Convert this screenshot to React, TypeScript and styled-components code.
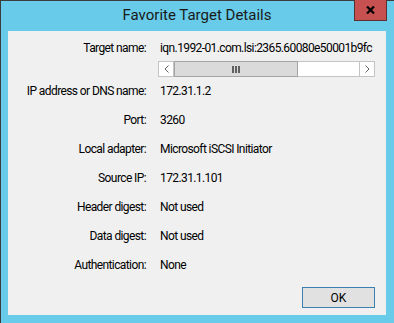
import styled, { createGlobalStyle } from "styled-components";

const GlobalStyle = createGlobalStyle`
  html, body {
    margin: 0;
    padding: 0;
    background: #ffffff;
  }
  * {
    box-sizing: border-box;
  }
`;

const Window = styled.div`
  position: relative;
  width: 394px;
  height: 323px;
  display: flex;
  flex-direction: column;
  background: #67cbe9;
  box-shadow: inset 1px 1px 0 #3c3c3c;
  font-family: Roboto, "Noto Sans", sans-serif;
  color: #000;
`;

const TitleBar = styled.div`
  height: 31px;
  display: flex;
  align-items: center;
  justify-content: center;
  font-size: 15px;
  color: #1a1a1a;
  padding-bottom: 1px;
`;

const CloseButton = styled.div`
  position: absolute;
  top: 0;
  right: 7px;
  width: 33px;
  height: 21px;
  display: flex;
  align-items: center;
  justify-content: center;
  background: #c75050;
  border: 1px solid #5b3030;
  border-top: none;
`;

const Client = styled.div`
  flex: 1;
  margin: 0 8px 8px 8px;
  background: #f0f0f0;
  padding: 10px 11px 7px 0;
  display: flex;
  flex-direction: column;
  font-size: 12px;
  letter-spacing: -0.6px;
`;

const Field = styled.div<{ $tall?: boolean }>`
  display: grid;
  grid-template-columns: 138px 1fr;
  column-gap: 14px;
  align-items: ${(p) => (p.$tall ? "start" : "center")};
  height: ${(p) => (p.$tall ? "auto" : "29px")};
  line-height: 15px;
`;

const Label = styled.div`
  text-align: right;
  white-space: nowrap;
`;

const Value = styled.div`
  white-space: nowrap;
`;

const ValueStack = styled.div`
  display: flex;
  flex-direction: column;
  gap: 5px;
`;

const Scrollbar = styled.div`
  width: 217px;
  height: 16px;
  margin-left: -2px;
  display: flex;
  background: #ffffff;
  border: 1px solid #c4c4c4;
`;

const Arrow = styled.div<{ $side: "left" | "right" }>`
  width: 15px;
  height: 14px;
  display: flex;
  align-items: center;
  justify-content: center;
  background: #ffffff;
  ${(p) =>
    p.$side === "left"
      ? "border-right: 1px solid #c4c4c4;"
      : "border-left: 1px solid #c4c4c4;"}
`;

const Thumb = styled.div`
  width: 124px;
  height: 16px;
  margin: -1px 0;
  display: flex;
  align-items: center;
  justify-content: center;
  background: #dadada;
  border: 1px solid #a4a4a4;
`;

const Track = styled.div`
  flex: 1;
`;

const Footer = styled.div`
  display: flex;
  justify-content: flex-end;
  margin-top: 7px;
`;

const Button = styled.button`
  width: 73px;
  height: 21px;
  padding: 0;
  font-family: inherit;
  font-size: 12px;
  color: #000;
  background: #e1e1e1;
  border: 1px solid #3c7fb1;
`;

const Chevron = ({ dir }: { dir: "left" | "right" }) => (
  <svg width="5" height="8" viewBox="0 0 5 8">
    <polyline
      points={dir === "left" ? "4.5,0.5 1,4 4.5,7.5" : "0.5,0.5 4,4 0.5,7.5"}
      fill="none"
      stroke="#606060"
      strokeWidth="1"
    />
  </svg>
);

const Grip = () => (
  <svg width="8" height="7" viewBox="0 0 8 7">
    <rect x="0" y="0" width="2" height="7" fill="#5f5f5f" />
    <rect x="3" y="0" width="2" height="7" fill="#5f5f5f" />
    <rect x="6" y="0" width="2" height="7" fill="#5f5f5f" />
  </svg>
);

const fields = [
  { label: "IP address or DNS name:", value: "172.31.1.2" },
  { label: "Port:", value: "3260" },
  { label: "Local adapter:", value: "Microsoft iSCSI Initiator" },
  { label: "Source IP:", value: "172.31.1.101" },
  { label: "Header digest:", value: "Not used" },
  { label: "Data digest:", value: "Not used" },
  { label: "Authentication:", value: "None" },
];

const App = () => {
  return (
    <>
      <GlobalStyle />
      <Window>
        <TitleBar>Favorite Target Details</TitleBar>
        <CloseButton>
          <svg width="9" height="8" viewBox="0 0 9 8">
            <path d="M1 0.5 L8 7.5 M8 0.5 L1 7.5" stroke="#000" strokeWidth="2.2" />
          </svg>
        </CloseButton>
        <Client>
          <Field $tall>
            <Label>Target name:</Label>
            <ValueStack>
              <Value>iqn.1992-01.com.lsi:2365.60080e50001b9fc</Value>
              <Scrollbar>
                <Arrow $side="left">
                  <Chevron dir="left" />
                </Arrow>
                <Thumb>
                  <Grip />
                </Thumb>
                <Track />
                <Arrow $side="right">
                  <Chevron dir="right" />
                </Arrow>
              </Scrollbar>
            </ValueStack>
          </Field>
          {fields.map((f) => (
            <Field key={f.label}>
              <Label>{f.label}</Label>
              <Value>{f.value}</Value>
            </Field>
          ))}
          <Footer>
            <Button>OK</Button>
          </Footer>
        </Client>
      </Window>
    </>
  );
};

export default App;
